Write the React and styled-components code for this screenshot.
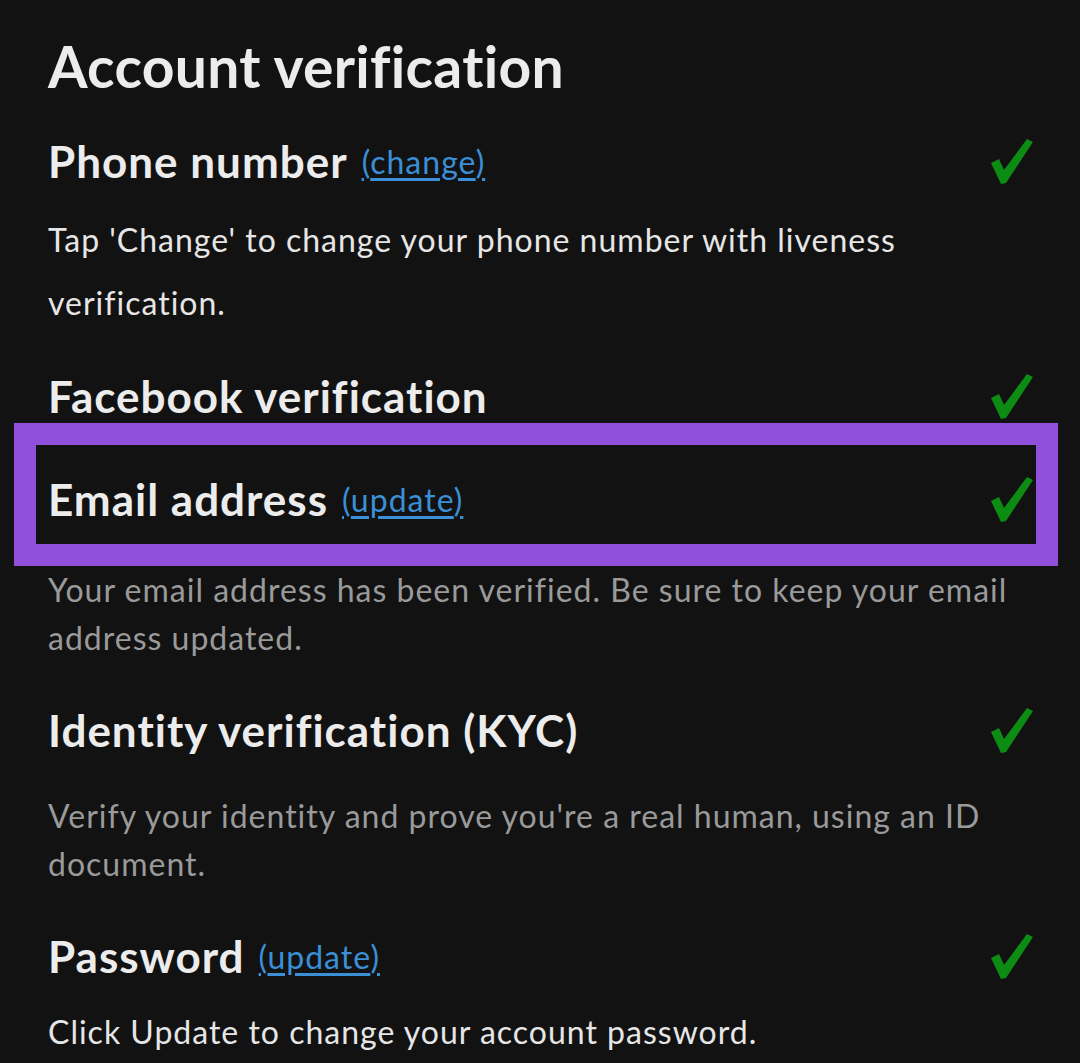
import React from 'react'
import styled, { createGlobalStyle } from 'styled-components'

const GlobalStyle = createGlobalStyle`
  html, body {
    margin: 0;
    padding: 0;
    background: #121212;
  }
  body {
    font-family: Lato, 'Open Sans', sans-serif;
    color: #ececec;
  }
`

function Check () {
  return (
    <CheckIcon viewBox='0 0 44 48' aria-hidden='true'>
      <path d='M1 26 L9 22 L14 33 L37 2 L43 5 L16 46 L11 47 Z' fill='#0d8c14' />
    </CheckIcon>
  )
}

function Item ({ title, link, children, muted, highlight, tall, spacing = 34, after = 40 }) {
  const head = (
    <HeadRow>
      <Heading>
        {title}
        {link && <EditLink href='#'>({link})</EditLink>}
      </Heading>
      <Check />
    </HeadRow>
  )
  return (
    <Section spacing={spacing} after={after}>
      {highlight ? <Highlight>{head}</Highlight> : head}
      {children && <Description muted={muted} tall={tall}>{children}</Description>}
    </Section>
  )
}

export default function App () {
  return (
    <>
      <GlobalStyle />
      <Page>
        <Title>Account verification</Title>
        <Item tall spacing={19} after={34} title='Phone number' link='change'>
          Tap 'Change' to change your phone number with liveness verification.
        </Item>
        <Item title='Facebook verification' />
        <Item highlight muted spacing={0} title='Email address' link='update'>
          Your email address has been verified. Be sure to keep your email address updated.
        </Item>
        <Item muted title='Identity verification (KYC)'>
          Verify your identity and prove you're a real human, using an ID document.
        </Item>
        <Item spacing={24} title='Password' link='update'>
          Click Update to change your account password.
        </Item>
      </Page>
    </>
  )
}

const Page = styled.div`
  padding: 30px 48px 0;
  height: 1063px;
  box-sizing: border-box;
  overflow: hidden;
  display: flex;
  flex-direction: column;
`

const Title = styled.h1`
  margin: 0 0 31px;
  font-size: 57px;
  line-height: 72px;
  font-weight: 700;
  letter-spacing: 0.3px;
  color: #ececec;
`

const Section = styled.section`
  display: flex;
  flex-direction: column;
  gap: ${p => p.spacing}px;
  margin-bottom: ${p => p.after}px;
`

const HeadRow = styled.div`
  display: flex;
  align-items: center;
  justify-content: space-between;
  height: 56px;
`

const Heading = styled.h2`
  margin: 0;
  font-size: 44px;
  line-height: 56px;
  font-weight: 700;
  letter-spacing: 1px;
  color: #ececec;
  white-space: nowrap;
`

const EditLink = styled.a`
  margin-left: 14px;
  font-size: 32px;
  font-weight: 400;
  letter-spacing: 1px;
  vertical-align: 4px;
  color: #3b8fd6;
  text-decoration: underline;
  text-underline-offset: 4px;
`

const CheckIcon = styled.svg`
  width: 44px;
  height: 48px;
  flex-shrink: 0;
  margin-right: -2px;
`

const Highlight = styled.div`
  margin: -41px -26px 0 -34px;
  padding: 26px 4px 17px 12px;
  border: 22px solid #9150dc;
`

const Description = styled.p`
  margin: 0;
  font-size: 32px;
  letter-spacing: 1px;
  line-height: ${p => (p.tall ? '63px' : '48px')};
  color: ${p => (p.muted ? '#9a9a9a' : '#e6e6e6')};
`
